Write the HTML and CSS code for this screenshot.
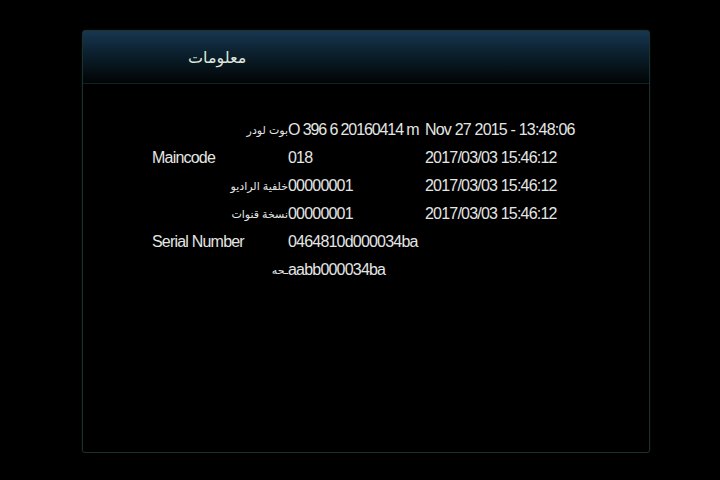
FILE: index.html
```html
<!DOCTYPE html>
<html lang="ar">
<head>
  <meta charset="UTF-8">
  <title>معلومات</title>
  <link rel="stylesheet" href="styles.css">
</head>
<body>
  <div class="panel">
    <div class="panel-head">
      <span class="title">معلومات</span>
    </div>

    <div class="info">
      <div class="row">
        <span class="c1 ar">بوت لودر</span>
        <span class="c2 tight">O 396 6 20160414 m</span>
        <span class="c3">Nov 27 2015 - 13:48:06</span>
      </div>
      <div class="row">
        <span class="c1">Maincode</span>
        <span class="c2">018</span>
        <span class="c3">2017/03/03 15:46:12</span>
      </div>
      <div class="row">
        <span class="c1 ar">خلفية الراديو</span>
        <span class="c2">00000001</span>
        <span class="c3">2017/03/03 15:46:12</span>
      </div>
      <div class="row">
        <span class="c1 ar">نسخة قنوات</span>
        <span class="c2">00000001</span>
        <span class="c3">2017/03/03 15:46:12</span>
      </div>
      <div class="row">
        <span class="c1">Serial Number</span>
        <span class="c2">0464810d000034ba</span>
      </div>
      <div class="row">
        <span class="c1 ar">ـحه</span>
        <span class="c2">aabb000034ba</span>
      </div>
    </div>
  </div>
</body>
</html>
```

FILE: styles.css
```css
body {
  margin: 0;
  background: #000;
  font-family: "Liberation Sans", "DejaVu Sans", sans-serif;
  color: #e4e6e4;
}
.panel {
  margin: 30px 0 0 82px;
  width: 566px;
  height: 421px;
  border: 1px solid #1c302d;
  border-radius: 3px;
  box-shadow: 0 0 2px #0c1c1a;
}
.panel-head {
  height: 52px;
  border-bottom: 1px solid #10221f;
  background: linear-gradient(#173650, #0b1f2c 45%, #010405 100%);
  display: flex;
  align-items: center;
  padding-left: 105px;
}
.title {
  font-size: 16px;
  color: #dfe6dc;
}
.info {
  padding: 32px 0 0 69px;
}
.row {
  display: flex;
  height: 28px;
  line-height: 28px;
  font-size: 16px;
  letter-spacing: -0.8px;
}
.c1 { width: 136px; }
.c1.ar {
  text-align: right;
  font-size: 11px;
  letter-spacing: 0;
}
.c2 { width: 137px; }
.c2.tight { letter-spacing: -1.1px; }
```
